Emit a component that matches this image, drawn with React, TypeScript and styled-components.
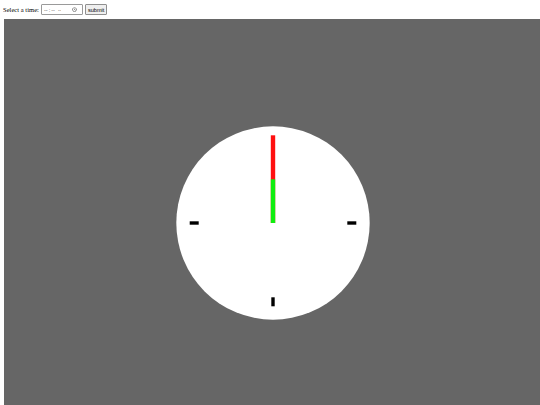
import React, { useState } from 'react';
import styled, { createGlobalStyle } from 'styled-components';

const GlobalStyle = createGlobalStyle`
  html, body {
    margin: 0;
    padding: 0;
    background: #ffffff;
    overflow: hidden;
  }
  body {
    font-family: "Liberation Serif", "Times New Roman", serif;
  }
`;

const Page = styled.div`
  display: flex;
  flex-direction: column;
  padding: 3px 0 0 4px;
`;

const Toolbar = styled.form`
  display: flex;
  align-items: center;
  gap: 2px;
  height: 13px;
  margin: 0 0 3px -1px;
  font-size: 6.6px;
  color: #000;
`;

const Label = styled.label`
  white-space: nowrap;
`;

const TimeInput = styled.input`
  box-sizing: border-box;
  width: 42px;
  height: 11px;
  padding: 0 1px;
  font-family: "Liberation Sans", Arial, sans-serif;
  font-size: 5.6px;
  border: 1px solid #9a9a9a;
  border-radius: 1px;
  color: #555;
`;

const SubmitButton = styled.button`
  box-sizing: border-box;
  height: 11px;
  padding: 0 2px;
  font-family: "Liberation Sans", Arial, sans-serif;
  font-size: 5.6px;
  color: #000;
  background: #efefef;
  border: 1px solid #8f8f8f;
  border-radius: 1px;
`;

const Stage = styled.div`
  box-sizing: border-box;
  display: flex;
  align-items: flex-start;
  justify-content: center;
  width: 538px;
  height: 386px;
  padding-top: 106px;
  background: #666666;
`;

const ClockFace = styled.svg`
  display: block;
  width: 196px;
  height: 196px;
`;

const R = 96.7;
const C = 98;

function Tick({ angle }: { angle: number }) {
  const rad = (angle * Math.PI) / 180;
  const x1 = C + Math.sin(rad) * 74.3;
  const y1 = C - Math.cos(rad) * 74.3;
  const x2 = C + Math.sin(rad) * 83.3;
  const y2 = C - Math.cos(rad) * 83.3;
  return <line x1={x1} y1={y1} x2={x2} y2={y2} stroke="#000" strokeWidth={3.4} />;
}

export default function App() {
  const [time, setTime] = useState('');
  const [h, m] = time ? time.split(':').map(Number) : [0, 0];
  const hourAngle = ((h % 12) + m / 60) * 30;
  const minuteAngle = m * 6;

  const hand = (angle: number, len: number) => {
    const rad = (angle * Math.PI) / 180;
    return { x: C + Math.sin(rad) * len, y: C - Math.cos(rad) * len };
  };
  const minEnd = hand(minuteAngle, 87.7);
  const hourEnd = hand(hourAngle, 43.7);

  return (
    <>
      <GlobalStyle />
      <Page>
        <Toolbar onSubmit={(e) => e.preventDefault()}>
          <Label htmlFor="time">Select a time:</Label>
          <TimeInput id="time" type="time" value={time} onChange={(e) => setTime(e.target.value)} />
          <SubmitButton type="submit">submit</SubmitButton>
        </Toolbar>
        <Stage>
          <ClockFace viewBox="0 0 196 196">
            <circle cx={C} cy={C} r={R} fill="#ffffff" />
            {[0, 90, 180, 270].map((a) => (
              <Tick key={a} angle={a} />
            ))}
            <line x1={C} y1={C} x2={minEnd.x} y2={minEnd.y} stroke="#ff1010" strokeWidth={4.4} />
            <line x1={C} y1={C} x2={hourEnd.x} y2={hourEnd.y} stroke="#10ee10" strokeWidth={4.4} />
          </ClockFace>
        </Stage>
      </Page>
    </>
  );
}
